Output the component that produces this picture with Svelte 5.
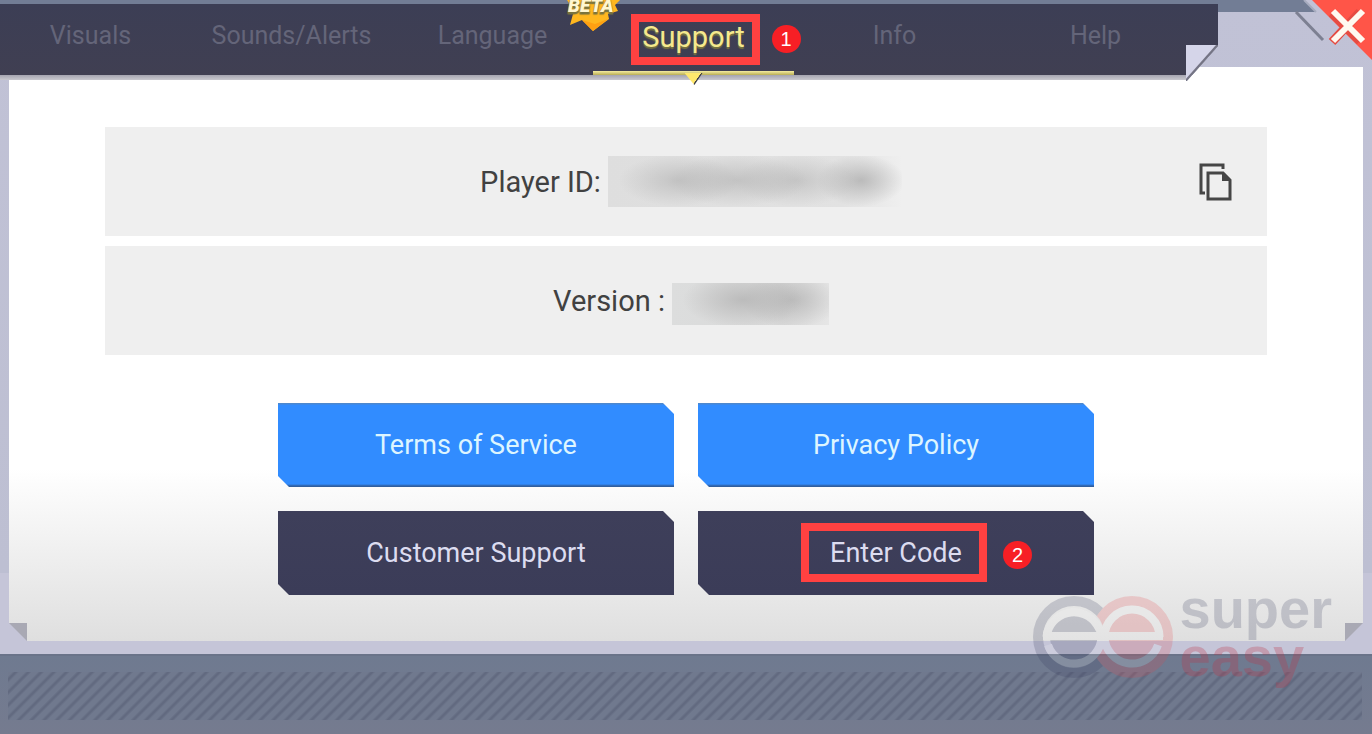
<script lang="ts">
type Tab = {
	id: string;
	label: string;
	beta?: boolean;
	step?: number;
};

type Action = {
	label: string;
	tone: 'blue' | 'dark';
	step?: number;
};

const tabs: Tab[] = [
	{ id: 'visuals', label: 'Visuals' },
	{ id: 'sounds', label: 'Sounds/Alerts' },
	{ id: 'language', label: 'Language' },
	{ id: 'support', label: 'Support', beta: true, step: 1 },
	{ id: 'info', label: 'Info' },
	{ id: 'help', label: 'Help' },
];

const actions: Action[] = [
	{ label: 'Terms of Service', tone: 'blue' },
	{ label: 'Privacy Policy', tone: 'blue' },
	{ label: 'Customer Support', tone: 'dark' },
	{ label: 'Enter Code', tone: 'dark', step: 2 },
];

let activeId = $state('support');
</script>

<div class="screen">
	<header class="header">
		<div class="tabs" role="tablist" aria-label="Settings">
			{#each tabs as tab (tab.id)}
				<button
					type="button"
					id={`${tab.id}-tab`}
					class="tab"
					class:tab--active={activeId === tab.id}
					role="tab"
					aria-selected={activeId === tab.id}
					aria-controls="settings-panel"
					onclick={() => (activeId = tab.id)}
				>
					{#if tab.beta}
						<svg class="beta" viewBox="0 0 56 34" aria-hidden="true">
							<path d="M2 0H55L50 5L53 11L43 14L44 19L28 31L17 20L5 25L8 14L3 11L6 6Z" fill="#ffb71f" />
							<path d="M17 20L28 31L43 19L30 24Z" fill="#ffa012" />
							<text x="3" y="12">BETA</text>
						</svg>
					{/if}
					<span class="tab__label">{tab.label}</span>
					{#if tab.step}
						<span class="frame"></span>
						<span class="step">{tab.step}</span>
					{/if}
				</button>
			{/each}
			<svg class="fold" viewBox="0 0 32 36" aria-hidden="true">
				<path d="M0 36V0H32Z" fill="#d5d5e9" />
				<path d="M0 36L32 0" stroke="#747484" stroke-width="3" />
			</svg>
		</div>
		<div class="corner">
			<svg class="corner__art" viewBox="0 0 154 67" aria-hidden="true">
				<path d="M0 0H86L98 12H0Z" fill="#727d95" />
				<path d="M78 12L105 40" stroke="#7d8092" stroke-width="3" />
				<path d="M86 0L98 12" stroke="#a7acbf" stroke-width="2" />
			</svg>
			<button type="button" class="close" aria-label="Close">
				<svg viewBox="0 0 60 60" aria-hidden="true">
					<path d="M0 0H60V60Z" fill="#ff5548" />
					<path d="M20 13L48 41M48 12L20 42" stroke="#e54c42" stroke-width="9" />
					<path d="M21 11L51 41M51 11L21 41" stroke="#fffaf0" stroke-width="6" />
				</svg>
			</button>
		</div>
	</header>

	<main class="panel" id="settings-panel" role="tabpanel" aria-labelledby="support-tab">
		<div class="row">
			<p class="row__text">
				Player ID:
				<span class="hidden-value hidden-value--id"></span>
			</p>
			<button type="button" class="copy" aria-label="Copy player ID">
				<svg viewBox="0 0 34 38" fill="none" stroke="#464646" stroke-width="3" aria-hidden="true">
					<path d="M25 6V2H3V30H7" />
					<path d="M10 10H25L32 17V36H10Z" />
					<path d="M24 9V18H33Z" fill="#464646" stroke="none" />
				</svg>
			</button>
		</div>
		<div class="row">
			<p class="row__text">
				Version :
				<span class="hidden-value hidden-value--version"></span>
			</p>
		</div>

		<div class="actions">
			{#each actions as action (action.label)}
				<button type="button" class="action action--{action.tone}">
					{action.label}
					{#if action.step}
						<span class="frame frame--action"></span>
						<span class="step step--action">{action.step}</span>
					{/if}
				</button>
			{/each}
		</div>

		<svg class="curl curl--left" viewBox="0 0 18 18" aria-hidden="true">
			<path d="M0 0H18V18Z" fill="#a9a9b4" />
		</svg>
		<svg class="curl curl--right" viewBox="0 0 18 18" aria-hidden="true">
			<path d="M0 0H18L0 18Z" fill="#a9a9b4" />
		</svg>
	</main>

	<footer class="footer"><div class="stripes"></div></footer>

	<div class="brand">
		<svg class="brand__logo" viewBox="-2 0 140 84" fill="none" aria-hidden="true">
			<defs>
				<g id="left-e">
					<path d="M11.500 42A27.500 27.500 0 0 1 62 30L66 37" />
					<path d="M8 41H68" />
					<path d="M13 50A27.500 27.500 0 0 0 66.500 42" />
				</g>
				<g id="right-e">
					<path d="M69.500 42A27.500 27.500 0 0 1 124.500 42" />
					<path d="M68 41H128" />
					<path d="M69.500 42A27.500 27.500 0 0 0 123 50" />
				</g>
				<mask id="cutout" maskUnits="userSpaceOnUse" x="-2" y="0" width="142" height="84">
					<rect x="-2" width="142" height="84" fill="#fff" />
					<g stroke="#000" stroke-width="8">
						<use href="#left-e" />
						<use href="#right-e" />
					</g>
				</mask>
				<mask id="behind-right" maskUnits="userSpaceOnUse" x="-2" y="0" width="142" height="84">
					<rect x="-2" width="142" height="84" fill="#fff" />
					<circle cx="97" cy="42" r="41" fill="#000" />
				</mask>
				<mask id="outside-left" maskUnits="userSpaceOnUse" x="-2" y="0" width="142" height="84">
					<rect x="-2" width="142" height="84" fill="#fff" />
					<circle cx="39" cy="42" r="31" fill="#000" />
				</mask>
			</defs>
			<g mask="url(#cutout)">
				<circle cx="39" cy="42" r="24" fill="#33395a" fill-opacity="0.2" />
				<circle cx="39" cy="42" r="36" stroke="#33395a" stroke-opacity="0.2" stroke-width="10" mask="url(#behind-right)" />
				<circle cx="97" cy="42" r="41" fill="#e8464c" fill-opacity="0.2" mask="url(#outside-left)" />
			</g>
			<g stroke="#fff" opacity="0.15" stroke-width="8">
				<use href="#left-e" />
				<use href="#right-e" />
			</g>
		</svg>
		<div class="brand__name">
			<span>super</span>
			<span class="brand__easy">easy</span>
		</div>
	</div>
</div>

<style>
	:global(body) {
		margin: 0;
	}

	.screen {
		position: relative;
		display: flex;
		flex-direction: column;
		min-height: 100vh;
		overflow: hidden;
		background: linear-gradient(#c1c2d6, #bdbfd2 78%, #c5c5d8 78%);
		font-family: Roboto, 'Liberation Sans', sans-serif;
	}

	button {
		position: relative;
		margin: 0;
		border: 0;
		padding: 0;
		background: none;
		font: inherit;
		cursor: pointer;
	}

	.header {
		position: relative;
		z-index: 1;
		display: flex;
		height: 75px;
	}

	.tabs {
		position: relative;
		display: grid;
		grid-template-columns: repeat(6, 1fr);
		flex: 1;
		box-sizing: border-box;
		margin-left: -10px;
		border-top: 4px solid #727d95;
		padding-right: 22px;
		background: linear-gradient(#3c3e55, #403f52);
		background-clip: padding-box;
		clip-path: polygon(0 0, 100% 0, 100% 46px, calc(100% - 32px) 82px, calc(100% - 32px) 80px, 60% 80px, 60% 90px, 40% 90px, 40% 80px, 0 80px);
	}

	/* soft shade under the bar */
	.tabs::after {
		content: '';
		position: absolute;
		top: 100%;
		right: 32px;
		left: 0;
		height: 5px;
		background: linear-gradient(#a5a4b0, #c9c9cf);
	}

	.tab {
		padding-bottom: 8px;
		color: #646579;
		font-size: 25px;
		line-height: 32px;
	}

	.tab--active {
		z-index: 1;
		padding-bottom: 6px;
		color: #f5e98d;
		font-size: 29px;
		text-shadow: 0 2px 1px #77733f;
	}

	.tab--active::before {
		content: '';
		position: absolute;
		right: 0;
		bottom: 0;
		left: 0;
		height: 4px;
		background: linear-gradient(#f5eda0, #b9ad55);
	}

	.tab--active::after {
		content: '';
		position: absolute;
		top: calc(100% - 2px);
		left: calc(50% - 9px);
		width: 18px;
		height: 12px;
		background: linear-gradient(125deg, #ffe86d 60%, #3e3e46 62%);
		clip-path: polygon(0 0, 100% 0, 55% 100%);
	}

	.beta {
		position: absolute;
		top: -4px;
		left: -28px;
		width: 56px;
		height: 34px;
	}

	.beta text {
		fill: #fff6cf;
		stroke: #d58b13;
		stroke-width: 1px;
		paint-order: stroke;
		font: italic 900 19px Roboto, sans-serif;
	}

	.fold {
		position: absolute;
		right: 0;
		bottom: -6px;
		width: 32px;
		height: 36px;
		background: #c1c2d6;
	}

	.frame {
		position: absolute;
		top: 10px;
		left: calc(50% - 63px);
		box-sizing: border-box;
		width: 129px;
		height: 51px;
		border: 8px solid #ff4141;
	}

	.frame--action {
		top: 12px;
		left: calc(50% - 95px);
		width: 186px;
		height: 59px;
	}

	.step {
		position: absolute;
		top: 21px;
		left: calc(50% + 78px);
		width: 29px;
		height: 28px;
		border-radius: 50%;
		background: #f71f25;
		color: #fff;
		font: 20px/28px 'Liberation Sans', sans-serif;
		text-align: center;
		text-shadow: none;
	}

	.step--action {
		top: 30px;
		left: calc(50% + 107px);
	}

	.corner {
		position: relative;
		width: 154px;
	}

	.corner__art {
		display: block;
		width: 154px;
		height: 67px;
	}

	.close {
		position: absolute;
		top: 0;
		right: 0;
		width: 60px;
		height: 60px;
	}

	.close svg,
	.copy svg {
		display: block;
		width: 100%;
		height: 100%;
	}

	.panel {
		position: relative;
		flex: 1;
		margin: -8px 9px 13px 9px;
		padding: 60px 7% 46px;
		background: linear-gradient(#fff 70%, #dfdfdf);
	}

	.row {
		display: grid;
		grid-template-columns: 1fr auto 1fr;
		align-items: center;
		height: 109px;
		margin-bottom: 10px;
		background: #efefef;
	}

	.row__text {
		grid-column: 2;
		display: flex;
		align-items: center;
		gap: 7px;
		margin: 0;
		padding-left: 10px;
		color: #414141;
		font-size: 29px;
		line-height: 36px;
	}

	.hidden-value {
		width: 294px;
		height: 51px;
		background:
			radial-gradient(ellipse 60px 26px at 24% 48%, #b5b5b5aa, transparent),
			radial-gradient(ellipse 70px 26px at 44% 48%, #b5b5b5aa, transparent),
			radial-gradient(ellipse 60px 26px at 64% 48%, #b9b9b9aa, transparent),
			radial-gradient(ellipse 44px 26px at 86% 48%, #b0b0b0cc, transparent),
			linear-gradient(90deg, #dedede, #e2e2e2 80%, #efefef);
	}

	.hidden-value--version {
		width: 157px;
		height: 42px;
		margin-top: 6px;
		background:
			radial-gradient(ellipse 60px 28px at 45% 40%, #b4b4b4cc, transparent),
			radial-gradient(ellipse 50px 28px at 76% 40%, #b4b4b4cc, transparent),
			linear-gradient(90deg, #dcdddd, #d9d9d9 70%, #e6e6e6);
	}

	.copy {
		justify-self: end;
		width: 34px;
		height: 38px;
		margin-right: 35px;
	}

	.actions {
		display: grid;
		grid-template-columns: 1fr 1fr;
		gap: 24px;
		max-width: 816px;
		margin: 48px auto 0;
	}

	.action {
		height: 84px;
		clip-path: polygon(0 0, calc(100% - 11px) 0, 100% 11px, 100% 100%, 11px 100%, 0 calc(100% - 11px));
		color: #dcdcf0;
		font-size: 27px;
		line-height: 36px;
	}

	.action--blue {
		background: linear-gradient(#4d88ce 1px, #318cff 2px, #318cff 81px, #315f9f 83px);
		color: #ddf5ff;
	}

	.action--dark {
		background: linear-gradient(#3e3f5a, #3b3c58);
	}

	.curl {
		position: absolute;
		bottom: 0;
		width: 18px;
		height: 18px;
		background: #c5c5d8;
	}

	.curl--left {
		left: 0;
	}

	.curl--right {
		right: 0;
	}

	.footer {
		box-sizing: border-box;
		height: 80px;
		border-top: 2px solid #6a7389;
		padding: 16px 10px 14px 8px;
		background: linear-gradient(#6f7a90, #757b8f);
	}

	.stripes {
		height: 48px;
		background: repeating-linear-gradient(135deg, #70798e 0 3px, #626a80 5px 6px, #70798e 8px 9px);
	}

	.brand {
		position: absolute;
		right: 40px;
		bottom: 53px;
		display: flex;
		align-items: flex-start;
		gap: 7px;
		pointer-events: none;
	}

	.brand__logo {
		width: 140px;
		height: 84px;
		margin-top: 10px;
	}

	.brand__name {
		display: flex;
		flex-direction: column;
		color: rgba(60, 66, 95, 0.22);
		font: bold 56px/48px 'Liberation Sans', sans-serif;
	}

	.brand__easy {
		color: rgba(190, 50, 70, 0.28);
	}
</style>
